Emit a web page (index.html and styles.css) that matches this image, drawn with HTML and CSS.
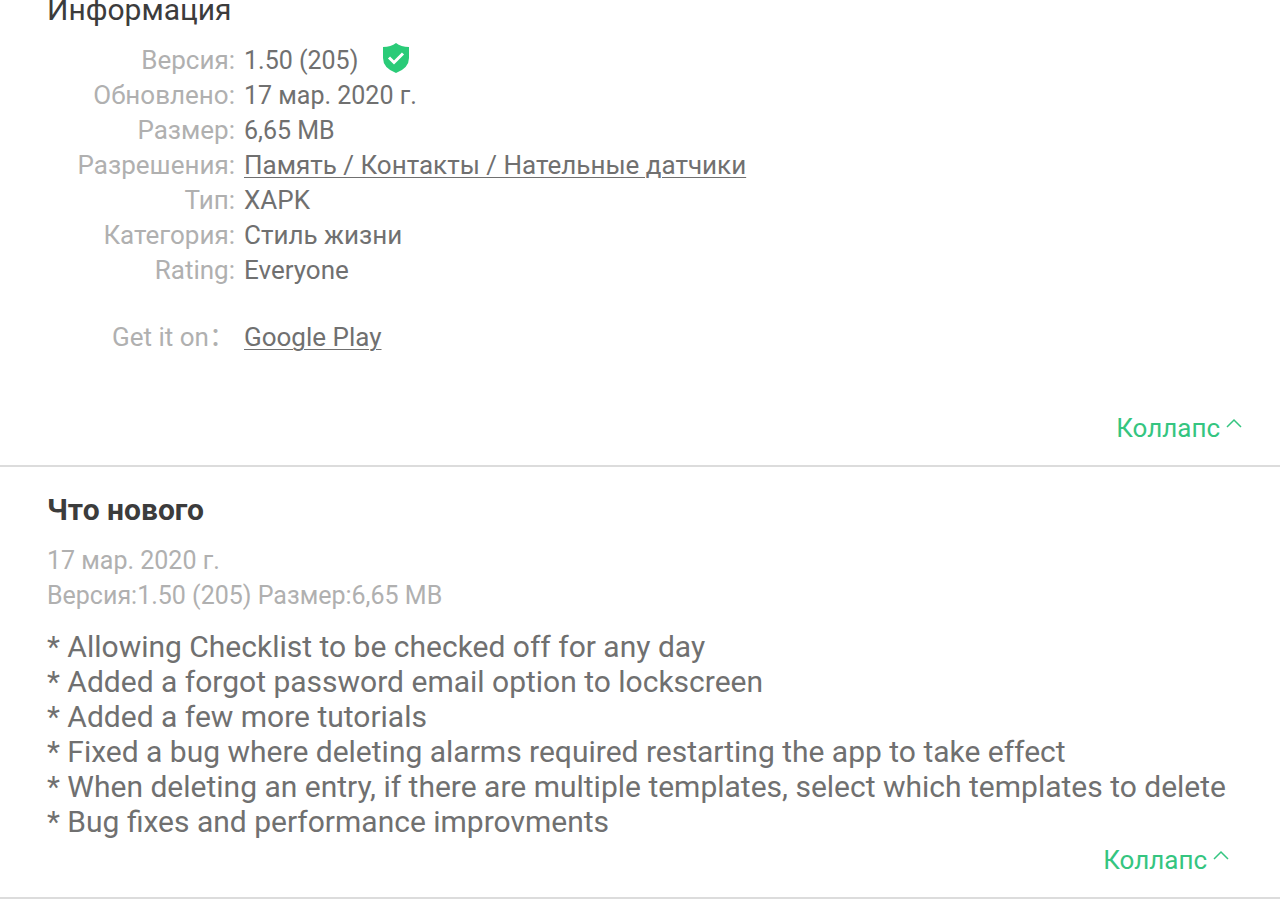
FILE: index.html
```html
<!DOCTYPE html>
<html lang="ru">
<head>
<meta charset="utf-8">
<meta name="viewport" content="width=device-width, initial-scale=1">
<title>Информация</title>
<link rel="stylesheet" href="styles.css">
</head>
<body>
<main>
<section class="section info">
<h2 class="title title-info">Информация</h2>
<dl class="details">
<dt>Версия:</dt><dd class="number">1.50 (205)<svg class="shield" viewBox="0 0 28 32" aria-hidden="true"><path class="shield-body" d="M14 1 Q19 5 27 5 V16 Q27 26 14 31 Q1 26 1 16 V5 Q9 5 14 1Z"/><path class="shield-check" d="M7 15.500l5 5 9-9"/></svg></dd>
<dt>Обновлено:</dt><dd class="number">17 мар. 2020 г.</dd>
<dt>Размер:</dt><dd class="number">6,65 MB</dd>
<dt>Разрешения:</dt><dd><a class="link" href="#">Память / Контакты / Нательные датчики</a></dd>
<dt>Тип:</dt><dd>XAPK</dd>
<dt>Категория:</dt><dd>Стиль жизни</dd>
<dt>Rating:</dt><dd>Everyone</dd>
</dl>
<dl class="details store">
<dt>Get it on<span lang="zh-CN" class="wide">：</span></dt><dd><a class="link" href="#">Google Play</a></dd>
</dl>
<button class="collapse" type="button">Коллапс<svg class="caret" viewBox="0 0 16 10" aria-hidden="true"><path d="M1 9l7-7 7 7"/></svg></button>
</section>
<section class="section news">
<h2 class="title">Что нового</h2>
<p class="meta">17 мар. 2020 г.<br>Версия:1.50 (205) Размер:6,65 MB</p>
<p class="changes">* Allowing Checklist to be checked off for any day<br>* Added a forgot password email option to lockscreen<br>* Added a few more tutorials<br>* Fixed a bug where deleting alarms required restarting the app to take effect<br>* When deleting an entry, if there are multiple templates, select which templates to delete<br>* Bug fixes and performance improvments</p>
<button class="collapse" type="button">Коллапс<svg class="caret" viewBox="0 0 16 10" aria-hidden="true"><path d="M1 9l7-7 7 7"/></svg></button>
</section>
</main>
</body>
</html>
```
FILE: styles.css
```css
* { box-sizing: border-box; }
body { margin: 0; background: #fff; color: #707070; font: 26px/35px Roboto, sans-serif; }
.section { display: flex; flex-direction: column; border-bottom: 2px solid #dcdcdc; padding: 0 48px 19px 47px; }
.title { margin: 0; color: #3c3c3c; font-size: 30px; line-height: 36px; font-weight: 700; }
.title-info { margin-top: -8px; font-weight: 400; }
.info { padding-right: 38px; }
.news { padding-top: 25px; padding-right: 51px; }
.details { display: grid; grid-template-columns: 188px 1fr; column-gap: 9px; margin: 15px 0 0; }
.details dt { color: #b0b0b0; text-align: right; }
.details dd { margin: 0; display: flex; align-items: center; }
.details .number, .meta { font-size: 25px; }
.wide { font-family: "Noto Sans CJK SC", sans-serif; line-height: 1; }
.store { margin-top: 32px; }
.link { color: inherit; text-underline-offset: 3px; text-decoration-thickness: 1px; }
.shield { width: 28px; height: 32px; margin: -6px 0 0 24px; }
.shield-body { fill: #2acb78; }
.shield-check { fill: none; stroke: #fff; stroke-width: 3; }
.collapse { align-self: flex-end; display: flex; gap: 6px; margin: 56px 0 0; padding: 0; border: 0; background: none; color: #35c580; font: inherit; }
.caret { width: 16px; height: 10px; margin-top: 7px; fill: none; stroke: #35c580; stroke-width: 1.5; }
.news .collapse { margin-top: 4px; }
.meta { margin: 15px 0 0; color: #b0b0b0; }
.changes { margin: 16px 0 0; font-size: 30px; }
```
